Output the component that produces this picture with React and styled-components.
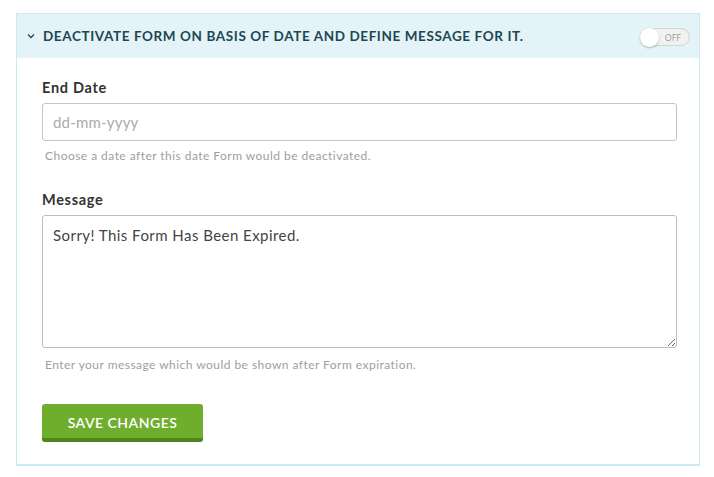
import React from "react";
import styled, { createGlobalStyle } from "styled-components";

const GlobalStyle = createGlobalStyle`
  body {
    margin: 0;
    background: #ffffff;
    font-family: "Lato", "Open Sans", sans-serif;
  }
`;

const Page = styled.div`
  padding: 13px 14px 12px 16px;
`;

const Panel = styled.section`
  border: 1px solid #c9eaf3;
  border-bottom-width: 2px;
  background: #ffffff;
`;

const Header = styled.div`
  display: flex;
  align-items: center;
  height: 44px;
  padding: 0 9px 0 10px;
  background: #e3f3f7;
`;

const Chevron = styled.span`
  display: flex;
  width: 10px;
  margin-right: 6px;
  color: #1f4b56;
`;

const Title = styled.h3`
  flex: 1;
  margin: 0;
  font-size: 13.5px;
  font-weight: 700;
  letter-spacing: 0.6px;
  color: #1c4753;
  text-transform: uppercase;
`;

const Toggle = styled.div`
  position: relative;
  width: 50px;
  height: 18px;
  margin-top: 2px;
  border: 1px solid #d4d4d4;
  border-radius: 10px;
  background: #f1f1f1;
  display: flex;
  align-items: center;
  justify-content: flex-end;
  padding-right: 8px;
  box-sizing: border-box;
  font-family: "Open Sans", sans-serif;
  font-size: 9px;
  color: #9b9b9b;
`;

const Knob = styled.span`
  position: absolute;
  left: -1px;
  top: -1px;
  width: 19px;
  height: 19px;
  border-radius: 50%;
  background: #ffffff;
  box-shadow: 0 1px 2px rgba(0, 0, 0, 0.25);
`;

const Body = styled.div`
  padding: 20px 22px 22px 25px;
`;

const Field = styled.div`
  margin-bottom: ${(p) => p.gap || 0}px;
`;

const Label = styled.label`
  display: block;
  margin-bottom: 5px;
  font-size: 14.5px;
  line-height: 20px;
  font-weight: 700;
  letter-spacing: 0.7px;
  color: #333333;
`;

const Input = styled.input`
  display: block;
  width: 100%;
  height: 38px;
  box-sizing: border-box;
  padding: 0 10px;
  border: 1px solid #c4c4c4;
  border-radius: 3px;
  font-family: "Lato", sans-serif;
  font-size: 15px;
  letter-spacing: 0.2px;
  color: #444444;
  &::placeholder {
    color: #ababab;
  }
`;

const TextArea = styled.textarea`
  display: block;
  width: 100%;
  height: 133px;
  box-sizing: border-box;
  padding: 9px 10px;
  border: 1px solid #bdbdbd;
  border-radius: 3px;
  font-family: "Lato", sans-serif;
  font-size: 15px;
  line-height: 20px;
  letter-spacing: 0.45px;
  color: #444444;
  resize: vertical;
`;

const Help = styled.p`
  margin: ${(p) => p.top}px 0 0 3px;
  font-size: 12px;
  line-height: 17px;
  letter-spacing: 0.46px;
  color: #9e9e9e;
`;

const SaveButton = styled.button`
  display: block;
  width: 161px;
  height: 38px;
  margin-top: 31px;
  border: none;
  border-bottom: 4px solid #4f8419;
  border-radius: 3px;
  background: #6fae2d;
  color: #ffffff;
  font-family: "Lato", sans-serif;
  font-size: 14px;
  font-weight: 600;
  letter-spacing: 0.5px;
  text-transform: uppercase;
  padding-top: 3px;
`;

export default function App() {
  return (
    <>
      <GlobalStyle />
      <Page>
        <Panel>
          <Header>
            <Chevron>
              <svg width="8" height="6" viewBox="0 0 8 6">
                <path d="M1 1.5 L4 4.5 L7 1.5" fill="none" stroke="currentColor" strokeWidth="1.3" />
              </svg>
            </Chevron>
            <Title>Deactivate form on basis of date and define message for it.</Title>
            <Toggle>
              <Knob />
              OFF
            </Toggle>
          </Header>
          <Body>
            <Field gap={26}>
              <Label>End Date</Label>
              <Input placeholder="dd-mm-yyyy" />
              <Help top={6}>Choose a date after this date Form would be deactivated.</Help>
            </Field>
            <Field>
              <Label>Message</Label>
              <TextArea defaultValue="Sorry! This Form Has Been Expired." />
              <Help top={8}>Enter your message which would be shown after Form expiration.</Help>
            </Field>
            <SaveButton>Save Changes</SaveButton>
          </Body>
        </Panel>
      </Page>
    </>
  );
}
